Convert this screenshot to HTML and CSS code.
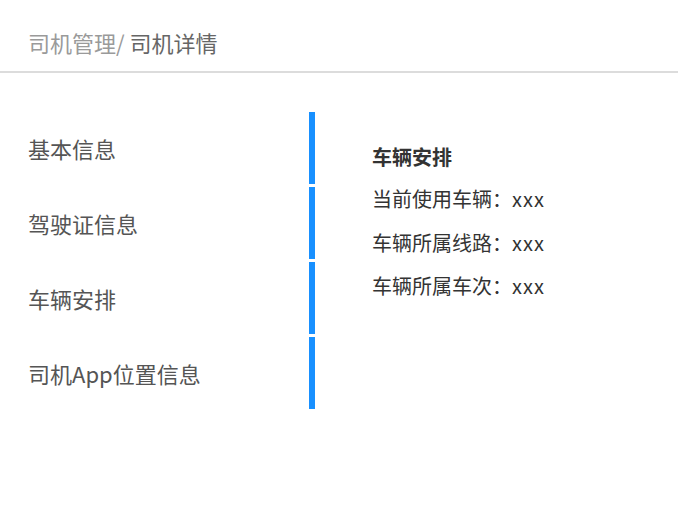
FILE: index.html
```html
<!DOCTYPE html>
<html lang="zh-CN">
<head>
<meta charset="utf-8">
<title>司机详情</title>
<link rel="stylesheet" href="styles.css">
</head>
<body>
  <header class="header">
    <span class="crumb-parent">司机管理/</span>
    <span class="crumb-current">司机详情</span>
  </header>
  <main class="detail">
    <nav class="menu">
      <div class="menu-item">基本信息</div>
      <div class="menu-item">驾驶证信息</div>
      <div class="menu-item">车辆安排</div>
      <div class="menu-item">司机App位置信息</div>
    </nav>
    <section class="content">
      <div class="content-title">车辆安排</div>
      <div class="content-row">当前使用车辆：<span class="value">xxx</span></div>
      <div class="content-row">车辆所属线路：<span class="value">xxx</span></div>
      <div class="content-row">车辆所属车次：<span class="value">xxx</span></div>
    </section>
  </main>
</body>
</html>
```

FILE: styles.css
```css
* {
  box-sizing: border-box;
}

html, body {
  margin: 0;
  padding: 0;
  background: #ffffff;
}

body {
  font-family: "Noto Sans CJK SC", "Noto Sans", sans-serif;
  color: #333333;
}

.header {
  height: 73px;
  padding: 26px 0 0 28px;
  border-bottom: 2px solid #dcdcdc;
  font-size: 22px;
  line-height: 32px;
}

.crumb-parent {
  color: #9a9a9a;
}

.crumb-current {
  color: #666666;
}

.detail {
  display: flex;
  padding-top: 39px;
}

.menu {
  display: flex;
  flex-direction: column;
  gap: 3px;
  width: 315px;
}

.menu-item {
  height: 72px;
  padding-left: 28px;
  border-right: 6px solid #1890ff;
  font-size: 22px;
  line-height: 72px;
  color: #555555;
}

.content {
  padding: 24px 0 0 57px;
  font-size: 20px;
  line-height: 43.5px;
  color: #333333;
}

.content-title {
  font-weight: bold;
  line-height: 41px;
}

.value {
  letter-spacing: 1px;
}
```
